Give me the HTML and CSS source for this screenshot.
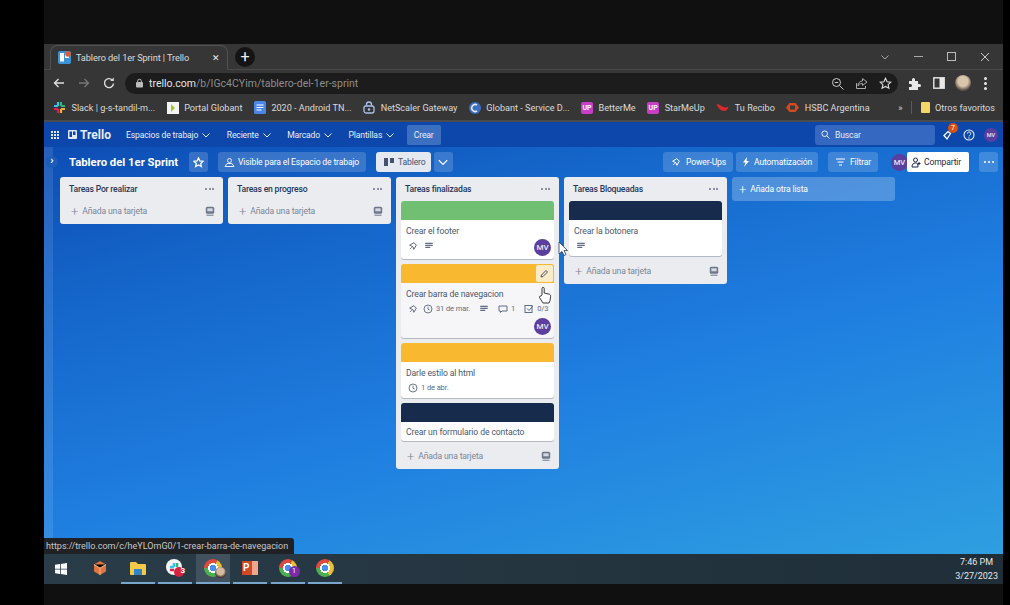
FILE: index.html
```html
<!doctype html>
<html>
	<head>
		<meta charset="utf-8">
		<title>Tablero del 1er Sprint | Trello</title>
		<link rel="stylesheet" href="styles.css">
	</head>
	<body>
		<svg class="defs" width="0" height="0">
			<symbol id="chev" viewBox="0 0 10 10"><path d="M1.500 3.500l3.500 3.500 3.500-3.500" fill="none" stroke="currentColor" stroke-width="1"/></symbol>
			<symbol id="pin" viewBox="0 0 12 12"><path d="M2 5l5-3 3 3-3 5-1-3z" fill="none" stroke="currentColor" stroke-width="1.200" stroke-linejoin="round"/><path d="M4.500 7.500L2.500 9.500" stroke="currentColor" stroke-width="1.100"/></symbol>
			<symbol id="lines" viewBox="0 0 12 12"><path d="M1.500 2.700h9M1.500 5.200h9M1.500 7.700h6" stroke="currentColor" stroke-width="1.500"/></symbol>
			<symbol id="clock" viewBox="0 0 12 12"><circle cx="6" cy="6" r="4.800" fill="none" stroke="currentColor" stroke-width="1.100"/><path d="M6 3.200V6.300L8 7.300" fill="none" stroke="currentColor" stroke-width="1"/></symbol>
			<symbol id="tmpl" viewBox="0 0 10 10"><rect x=".8" y=".8" width="8.400" height="7" rx="1.500" fill="currentColor"/><path d="M1.500 9.200h7" stroke="currentColor" stroke-width="1"/><rect x="2.300" y="2.300" width="5.400" height="3" fill="#d5d9df"/></symbol>
		</svg>
		<div class="screen">
			<div class="window">
				<div class="tabstrip">
					<div class="tab">
						<svg class="favicon" width="13" height="13" viewBox="0 0 13 13"><rect width="13" height="13" rx="2" fill="#3d93d8"/><rect x="2" y="2" width="4" height="8.500" fill="#fff"/><rect x="7" y="2" width="4" height="5" fill="#fff"/><circle cx="10" cy="3" r="2.800" fill="#dd5a35"/></svg>
						<span class="tab-title">Tablero del 1er Sprint | Trello</span>
						<span class="tab-x">&#x2715;</span>
					</div>
					<span class="newtab">+</span>
					<div class="winbtns">
						<svg width="10" height="10"><use href="#chev"/></svg>
						<span class="min"></span>
						<span class="max"></span>
						<svg width="10" height="10" viewBox="0 0 10 10"><path d="M1 1l8 8M9 1l-8 8" stroke="#c9c9c9" stroke-width="1"/></svg>
					</div>
				</div>
				<div class="toolbar">
					<svg class="nav-ic" width="14" height="14" viewBox="0 0 14 14"><path d="M12 7H2.500M6.500 3l-4 4 4 4" fill="none" stroke="#dedede" stroke-width="1.400"/></svg>
					<svg class="nav-ic" width="14" height="14" viewBox="0 0 14 14"><path d="M2 7h9.500M7.500 3l4 4-4 4" fill="none" stroke="#777" stroke-width="1.400"/></svg>
					<svg class="nav-ic" width="14" height="14" viewBox="0 0 14 14"><path d="M11.500 7.500a4.500 4.500 0 1 1-1.300-3.600" fill="none" stroke="#dedede" stroke-width="1.400"/><path d="M11.800 1.500v3.600H8.200z" fill="#dedede"/></svg>
					<div class="omnibox">
						<svg width="9" height="10" viewBox="0 0 9 10"><rect x="1" y="4" width="7" height="5.500" rx="1" fill="#bbb"/><path d="M2.700 4.500V3a1.800 1.800 0 0 1 3.600 0v1.500" fill="none" stroke="#bbb"/></svg>
						<span class="url"><b>trello.com</b>/b/IGc4CYim/tablero-del-1er-sprint</span>
						<svg class="omni-ic" width="13" height="13" viewBox="0 0 13 13"><circle cx="5.500" cy="5.500" r="4" fill="none" stroke="#ccc"/><path d="M8.500 8.500l4 4M3.700 5.500h3.600" stroke="#ccc"/></svg>
						<svg class="omni-ic" width="13" height="13" viewBox="0 0 13 13"><path d="M1.500 6v5.500h9V9M7.500 1.500l4.500 3.500-4.500 3.500V6.500C5 6.500 3.500 7.500 3 9c0-3 2-5 4.500-5z" fill="none" stroke="#aaa"/></svg>
						<svg class="omni-ic" width="13" height="13" viewBox="0 0 13 13"><path d="M6.500 1.200l1.600 3.500 3.800.4-2.800 2.500.8 3.700-3.400-1.900-3.400 1.900.8-3.700L1.100 5.100l3.800-.4z" fill="none" stroke="#ddd" stroke-width="1.100"/></svg>
					</div>
					<svg class="tool-ic puzzle" width="13" height="13" viewBox="0 0 13 13"><path d="M1 4h3V2.500a1.500 1.500 0 0 1 3 0V4h3v3h1.500a1.500 1.500 0 0 1 0 3H10v3H1V10h1.500a1.500 1.500 0 0 0 0-3H1z" fill="#e8e8e8"/></svg>
					<svg class="tool-ic" width="12" height="12" viewBox="0 0 12 12"><rect x=".8" y=".8" width="10.400" height="10.400" fill="none" stroke="#e8e8e8" stroke-width="1.400"/><rect x="6.500" y="1" width="4.500" height="10" fill="#e8e8e8"/></svg>
					<span class="profile"></span>
					<span class="dots3"><i></i><i></i><i></i></span>
				</div>
				<div class="bookmarks">
					<span class="bm"><svg width="13" height="13" viewBox="0 0 13 13"><path d="M5 1v4M1 5h4" stroke="#36c5f0" stroke-width="2.200"/><path d="M8 1v4M8 5h4" stroke="#2eb67d" stroke-width="2.200"/><path d="M8 12V8M12 8H8" stroke="#ecb22e" stroke-width="2.200"/><path d="M5 12V8M1 8h4" stroke="#e01e5a" stroke-width="2.200"/></svg>Slack | g-s-tandil-m...</span>
					<span class="bm"><svg width="12" height="12" viewBox="0 0 12 12"><rect width="12" height="12" fill="#f4f4f4"/><path d="M4 2l4 4-4 4z" fill="#a5c33a"/></svg>Portal Globant</span>
					<span class="bm"><svg width="12" height="13" viewBox="0 0 12 13"><rect width="12" height="13" rx="1.500" fill="#4a86e8"/><path d="M2.500 4h7M2.500 6.500h7M2.500 9h5" stroke="#fff" stroke-width="1.100"/></svg>2020 - Android TN...</span>
					<span class="bm"><svg width="12" height="13" viewBox="0 0 12 13"><rect x="1" y="5" width="10" height="7" rx="2" fill="none" stroke="#a9c1ee" stroke-width="1.300"/><path d="M3.500 5V3.500a2.500 2.500 0 0 1 5 0V5" fill="none" stroke="#a9c1ee" stroke-width="1.300"/><circle cx="6" cy="8.500" r="1.200" fill="#a9c1ee"/></svg>NetScaler Gateway</span>
					<span class="bm"><svg width="12" height="12" viewBox="0 0 12 12"><circle cx="6" cy="6" r="6" fill="#3c6fc0"/><path d="M8 3a3.500 3.500 0 1 0 0 6" fill="none" stroke="#e5e9f2" stroke-width="1.500"/></svg>Globant - Service D...</span>
					<span class="bm"><span class="up">UP</span>BetterMe</span>
					<span class="bm"><span class="up">UP</span>StarMeUp</span>
					<span class="bm"><svg width="13" height="9" viewBox="0 0 13 9"><path d="M.5 1c3 0 4 1.500 6 2.500S10 5 12.500 3.500C12 6.500 10 8.500 7.500 8 4 7.500 2 5 .5 1z" fill="#d92b2b"/></svg>Tu Recibo</span>
					<span class="bm"><svg width="13" height="9" viewBox="0 0 13 9"><path d="M0 4.500L3.500 0h6L13 4.500 9.500 9h-6z" fill="#d8481d"/><rect x="4" y="2.500" width="5" height="4" fill="#3a3a3a"/></svg>HSBC Argentina</span>
					<span class="grow"></span>
					<span class="bm-more">&raquo;</span>
					<span class="bm-sep"></span>
					<span class="bm"><svg width="9" height="11" viewBox="0 0 9 11"><rect width="9" height="11" rx="1" fill="#f4d768"/></svg>Otros favoritos</span>
				</div>
				<nav class="trello-nav">
					<span class="apps"><i></i><i></i><i></i><i></i><i></i><i></i><i></i><i></i><i></i></span>
					<span class="logo"><svg width="9" height="9" viewBox="0 0 9 9"><rect width="9" height="9" rx="1" fill="#dfe9f8"/><rect x="1.500" y="1.500" width="2.500" height="5.500" fill="#0d47ab"/><rect x="5" y="1.500" width="2.500" height="3.500" fill="#0d47ab"/></svg>Trello</span>
					<span class="menu">Espacios de trabajo <svg width="10" height="10"><use href="#chev"/></svg></span>
					<span class="menu">Reciente <svg width="10" height="10"><use href="#chev"/></svg></span>
					<span class="menu">Marcado <svg width="10" height="10"><use href="#chev"/></svg></span>
					<span class="menu">Plantillas <svg width="10" height="10"><use href="#chev"/></svg></span>
					<span class="crear">Crear</span>
					<span class="grow"></span>
					<span class="search"><svg width="9" height="9" viewBox="0 0 9 9"><circle cx="3.700" cy="3.700" r="2.800" fill="none" stroke="#e5edf8"/><path d="M5.800 5.800L8.500 8.500" stroke="#e5edf8"/></svg>Buscar</span>
					<span class="bell"><svg width="12" height="12" viewBox="0 0 12 12"><path d="M2 6.500L5 10 8.500 4.500 6 2.500z" fill="none" stroke="#fff" stroke-width="1.300"/></svg><em class="badge">7</em></span>
					<svg width="12" height="12" viewBox="0 0 12 12"><circle cx="6" cy="6" r="5" fill="none" stroke="#e5edf8" stroke-width="1.100"/><path d="M4.400 4.700a1.700 1.700 0 1 1 2.400 1.500c-.6.300-.8.600-.8 1.200" fill="none" stroke="#e5edf8"/><circle cx="6" cy="9" r=".7" fill="#e5edf8"/></svg>
					<span class="avatar small">MV</span>
				</nav>
				<main class="board">
					<span class="expand">&rsaquo;</span>
					<div class="boardbar">
						<h1 class="board-name">Tablero del 1er Sprint</h1>
						<span class="bbtn star"><svg width="11" height="11" viewBox="0 0 13 13"><path d="M6.500 1.200l1.600 3.500 3.800.4-2.800 2.500.8 3.700-3.400-1.900-3.400 1.900.8-3.700L1.100 5.100l3.800-.4z" fill="none" stroke="#fff" stroke-width="1.500"/></svg></span>
						<span class="bbtn vis"><svg width="11" height="11" viewBox="0 0 11 11"><circle cx="5.500" cy="3.500" r="2" fill="none" stroke="#e5edf8"/><path d="M1 9.500l2-3h5l2 3z" fill="none" stroke="#e5edf8"/></svg>Visible para el Espacio de trabajo</span>
						<span class="bbtn active"><svg width="10" height="8" viewBox="0 0 10 8"><path d="M0 0h4v8H0zM6 0h4v5H6z" fill="#42526e"/></svg>Tablero</span>
						<span class="bbtn caret"><svg width="12" height="12" viewBox="0 0 10 10"><use href="#chev"/></svg></span>
						<span class="grow"></span>
						<span class="bbtn pow"><svg width="10" height="10" viewBox="0 0 12 12" color="#fff"><use href="#pin"/></svg>Power-Ups</span>
						<span class="bbtn aut"><svg width="8" height="10" viewBox="0 0 8 10"><path d="M5 0L1 5.500h2.500L2 10l5-6H4.500z" fill="#fff"/></svg>Automatización</span>
						<span class="bbtn fil"><svg width="9" height="8" viewBox="0 0 9 8"><path d="M0 1h9M1.500 4h6M3 7h3" stroke="#fff"/></svg>Filtrar</span>
						<span class="avatar member">MV</span>
						<span class="share"><svg width="11" height="11" viewBox="0 0 11 11"><circle cx="4.500" cy="3" r="2" fill="none" stroke="#172b4d"/><path d="M1 10c0-3 1.500-4 3.500-4S7 7 7 10zM8 5v3M6.500 6.500h3" fill="none" stroke="#172b4d"/></svg>Compartir</span>
						<span class="bbtn more"><i></i><i></i><i></i></span>
					</div>
					<div class="lists">
						<section class="list">
							<header class="list-head"><h2>Tareas Por realizar</h2><span class="ell"><i></i><i></i><i></i></span></header>
							<div class="add"><span class="plus">+</span>Añada una tarjeta<svg width="10" height="10"><use href="#tmpl"/></svg></div>
						</section>
						<section class="list">
							<header class="list-head"><h2>Tareas en progreso</h2><span class="ell"><i></i><i></i><i></i></span></header>
							<div class="add"><span class="plus">+</span>Añada una tarjeta<svg width="10" height="10"><use href="#tmpl"/></svg></div>
						</section>
						<section class="list">
							<header class="list-head"><h2>Tareas finalizadas</h2><span class="ell"><i></i><i></i><i></i></span></header>
							<article class="card">
								<div class="cover green"></div>
								<div class="title">Crear el footer</div>
								<div class="badges tall">
									<svg width="10" height="10"><use href="#pin"/></svg>
									<svg width="10" height="10"><use href="#lines"/></svg>
									<span class="avatar">MV</span>
								</div>
							</article>
							<article class="card hover">
								<div class="cover orange"><span class="pencil"><svg width="9" height="9" viewBox="0 0 9 9"><path d="M1 8l.5-2L6 1.500 7.500 3 3 7.500z" fill="none" stroke="#42526e"/></svg></span></div>
								<div class="title">Crear barra de navegacion</div>
								<div class="badges">
									<svg width="10" height="10"><use href="#pin"/></svg>
									<svg width="10" height="10"><use href="#clock"/></svg><small>31 de mar.</small>
									<svg class="gap" width="10" height="10"><use href="#lines"/></svg>
									<svg class="gap" width="10" height="10" viewBox="0 0 10 10"><path d="M1 2h8v5H4L2.500 8.500V7H1z" fill="none" stroke="#5e6c84"/></svg><small>1</small>
									<svg class="gap" width="10" height="10" viewBox="0 0 10 10"><rect x="1" y="1.500" width="7" height="7" fill="none" stroke="#5e6c84"/><path d="M3 4.500l2 2L9 2" fill="none" stroke="#5e6c84"/></svg><small>0/3</small>
								</div>
								<div class="card-foot"><span class="avatar">MV</span></div>
							</article>
							<article class="card">
								<div class="cover orange"></div>
								<div class="title">Darle estilo al html</div>
								<div class="badges">
									<svg width="10" height="10"><use href="#clock"/></svg><small>1 de abr.</small>
								</div>
							</article>
							<article class="card">
								<div class="cover navy"></div>
								<div class="title only">Crear un formulario de contacto</div>
							</article>
							<div class="add"><span class="plus">+</span>Añada una tarjeta<svg width="10" height="10"><use href="#tmpl"/></svg></div>
						</section>
						<section class="list">
							<header class="list-head"><h2>Tareas Bloqueadas</h2><span class="ell"><i></i><i></i><i></i></span></header>
							<article class="card">
								<div class="cover navy"></div>
								<div class="title">Crear la botonera</div>
								<div class="badges"><svg width="10" height="10"><use href="#lines"/></svg></div>
							</article>
							<div class="add"><span class="plus">+</span>Añada una tarjeta<svg width="10" height="10"><use href="#tmpl"/></svg></div>
						</section>
						<div class="addlist"><span class="plus">+</span>Añada otra lista</div>
					</div>
				</main>
				<div class="status">https://trello.com/c/heYLOmG0/1-crear-barra-de-navegacion</div>
				<svg class="cursor arrow" width="10" height="16" viewBox="0 0 10 16"><path d="M1 1v12l3-2.500 2 4 2-1-2-4h3.500z" fill="#fff" stroke="#2a3a55" stroke-width=".8"/></svg>
				<svg class="cursor hand" width="14" height="18" viewBox="0 0 14 18"><path d="M4 9V2.500a1.100 1.100 0 0 1 2.200 0V7l5 1.200c1 .3 1.500 1 1.400 2L12 14.500 11 17H5L1.500 11.500c-.5-1 .8-2 1.500-1.200z" fill="#fff" stroke="#222" stroke-width=".9"/></svg>
			</div>
			<footer class="taskbar">
				<svg class="win" width="12" height="12" viewBox="0 0 12 12"><path d="M0 1.700l5-.7v4.700H0zM5.800.9L12 0v5.700H5.800zM0 6.400h5V11l-5-.7zM5.800 6.400H12V12l-6.200-.9z" fill="#fff"/></svg>
				<span class="tb"><svg width="18" height="18" viewBox="0 0 18 18"><path d="M9 2l6 3.500v7L9 16l-6-3.500v-7z" fill="#e0763f"/><path d="M3 5.500L9 9l6-3.500M9 9v7" stroke="#f3b48a"/></svg></span>
				<span class="tb on"><svg width="18" height="16" viewBox="0 0 18 16"><path d="M1 3a1 1 0 0 1 1-1h5l2 2h7a1 1 0 0 1 1 1v9a1 1 0 0 1-1 1H2a1 1 0 0 1-1-1z" fill="#f5c945"/><rect x="5" y="9" width="8" height="6" fill="#2f83c7"/></svg></span>
				<span class="tb on"><svg width="20" height="20" viewBox="0 0 20 20"><circle cx="9" cy="9" r="8" fill="#f4f4f4"/><path d="M5 9h4M9 5v4" stroke="#36c5f0" stroke-width="2.500"/><path d="M12 5v4" stroke="#2eb67d" stroke-width="2.500"/><path d="M5 12h4" stroke="#e01e5a" stroke-width="2.500"/><circle cx="14" cy="14" r="5" fill="#d5243b"/></svg><em class="tb-num">3</em></span>
				<span class="tb on cur"><span class="chrome"></span><span class="mini-face"></span></span>
				<span class="tb on"><svg width="18" height="18" viewBox="0 0 18 18"><rect x="6" y="2" width="11" height="14" fill="#f1a58b"/><rect x="1" y="2" width="10" height="14" fill="#d24726"/></svg><em class="ppt">P</em></span>
				<span class="tb on"><span class="chrome"></span><em class="tb-pur">1</em></span>
				<span class="tb on"><span class="chrome"></span></span>
				<span class="grow"></span>
				<div class="clock"><div>7:46 PM</div><div>3/27/2023</div></div>
			</footer>
		</div>
	</body>
</html>
```

FILE: styles.css
```css
html, body {
    margin: 0;
    padding: 0;
    height: 100%;
    background: #000;
    overflow: hidden;
    font-family: Roboto, "Noto Sans", Arial, sans-serif;
}
svg {
    flex: none;
}
.defs {
    display: none;
}
.screen {
    margin-left: 44px;
    width: 959px;
    height: 605px;
    box-sizing: border-box;
    padding: 44px 0 21px;
    background: #101010;
    display: flex;
    flex-direction: column;
}
.window {
    position: relative;
    height: 510px;
    display: flex;
    flex-direction: column;
    overflow: hidden;
}
.grow {
    flex: 1;
}

/* chrome */
.tabstrip {
    height: 26px;
    flex: none;
    background: #363636;
    display: flex;
    align-items: flex-end;
    box-sizing: border-box;
    padding-left: 6px;
    border-bottom: 1px solid #4a4a4a;
}
.tab {
    width: 178px;
    height: 25px;
    box-sizing: border-box;
    background: #363636;
    border: 1px solid #525252;
    border-bottom: 1px solid #363636;
    border-radius: 7px 7px 0 0;
    margin-bottom: -1px;
    display: flex;
    align-items: center;
    padding: 0 7px 0 7px;
    color: #dcdcdc;
    font-size: 9.200px;
    letter-spacing: -.1px;
}
.favicon {
    margin-right: 5px;
}
.tab-title {
    flex: 1;
}
.tab-x {
    font-size: 9px;
    color: #eee;
}
.newtab {
    width: 20px;
    height: 20px;
    margin: 0 0 2px 7px;
    border-radius: 50%;
    background: #141414;
    color: #eee;
    text-align: center;
    line-height: 19px;
    font-size: 16px;
}
.winbtns {
    margin-left: auto;
    height: 25px;
    display: flex;
    align-items: center;
    gap: 24px;
    padding-right: 13px;
    color: #a5a5a5;
}
.min {
    width: 9px;
    border-top: 1px solid #aaa;
}
.max {
    width: 7px;
    height: 7px;
    border: 1px solid #bbb;
}
.toolbar {
    height: 26px;
    flex: none;
    background: #363636;
    display: flex;
    align-items: center;
    padding-left: 8px;
}
.nav-ic {
    margin-right: 11px;
}
.omnibox {
    margin-left: -2px;
    width: 773px;
    height: 21px;
    border-radius: 11px;
    background: #1c1c1c;
    display: flex;
    align-items: center;
    box-sizing: border-box;
    padding: 0 6px 0 10px;
}
.url {
    flex: 1;
    margin-left: 5px;
    font-size: 10.500px;
    color: #8e8e8e;
}
.url b {
    font-weight: 400;
    color: #e4e4e4;
}
.omni-ic {
    margin-left: 11px;
}
.tool-ic {
    margin-left: 12px;
}
.tool-ic.puzzle {
    margin-left: 10px;
}
.profile {
    width: 16px;
    height: 16px;
    margin-left: 10px;
    border-radius: 50%;
    background: radial-gradient(circle at 50% 40%, #d9c4ac 0 40%, #5f5145 70%);
}
.dots3 {
    margin-left: 13px;
    display: flex;
    flex-direction: column;
    gap: 2px;
}
.dots3 i {
    width: 3px;
    height: 3px;
    border-radius: 50%;
    background: #e8e8e8;
}
.bookmarks {
    height: 26px;
    flex: none;
    box-sizing: border-box;
    background: #363636;
    border-bottom: 2px solid #4b4b4b;
    display: flex;
    align-items: center;
    padding: 0 8px 1px 9px;
    gap: 11.500px;
    color: #dadada;
    font-size: 9.100px;
    white-space: nowrap;
}
.bm {
    display: flex;
    align-items: center;
    gap: 5.500px;
}
.up {
    width: 12px;
    height: 12px;
    border-radius: 2px;
    background: #c93ec6;
    color: #fff;
    font-size: 7px;
    font-weight: 700;
    text-align: center;
    line-height: 12px;
}
.bm-sep {
    height: 13px;
    margin: 0 -3px;
    border-left: 1px solid #5a5a5a;
}

/* trello header */
.trello-nav {
    height: 25px;
    flex: none;
    background: #0d47ab;
    display: flex;
    align-items: center;
    padding: 0 4px 0 7px;
    color: #e5edf8;
    font-size: 8.600px;
    letter-spacing: -.15px;
    white-space: nowrap;
}
.apps {
    display: grid;
    grid-template-columns: repeat(3, 2px);
    gap: 1px;
    margin-right: 9px;
}
.apps i {
    width: 2px;
    height: 2px;
    background: #dfe9f8;
}
.logo {
    display: flex;
    align-items: center;
    gap: 3px;
    font-size: 12px;
    font-weight: 700;
    letter-spacing: 0;
    margin-right: 12px;
    width: 46px;
}
.menu {
    display: flex;
    align-items: center;
    gap: 3px;
    margin-right: 15.500px;
}
.crear {
    width: 34px;
    height: 20px;
    margin-left: -4px;
    border-radius: 2px;
    background: #3c6fc0;
    text-align: center;
    line-height: 20px;
}
.search {
    width: 120px;
    height: 20px;
    box-sizing: border-box;
    border-radius: 3px;
    background: #3568c0;
    display: flex;
    align-items: center;
    gap: 5px;
    padding-left: 6px;
    margin-right: 7px;
}
.bell {
    position: relative;
    display: flex;
    margin: 0 9px 0 0;
}
.badge {
    position: absolute;
    left: 6px;
    top: -6px;
    width: 10px;
    height: 10px;
    border-radius: 50%;
    background: #d9500f;
    color: #fff;
    font-size: 7px;
    font-style: normal;
    text-align: center;
    line-height: 10px;
}
.avatar {
    width: 17px;
    height: 17px;
    border-radius: 50%;
    background: #5a3f9e;
    color: #e9e6f6;
    font-size: 8px;
    font-weight: 500;
    letter-spacing: 0;
    text-align: center;
    line-height: 17px;
    flex: none;
}
.avatar.small {
    width: 14px;
    height: 14px;
    margin-left: 9px;
    margin-right: 1px;
    font-size: 5.500px;
    line-height: 14px;
}

/* board */
.board {
    position: relative;
    flex: 1;
    box-sizing: border-box;
    padding-left: 10px;
    background: linear-gradient(165deg, #0d4db4 0%, #1464c8 22%, #1f7fe0 58%, #2e9fe0 100%);
}
.board::before {
    content: "";
    position: absolute;
    left: 0;
    top: 0;
    bottom: 0;
    width: 9px;
    background: rgba(255, 255, 255, .1);
}
.expand {
    position: absolute;
    left: 2px;
    top: 9px;
    width: 12px;
    height: 12px;
    border-radius: 50%;
    background: #1b5cb8;
    color: #fff;
    font-size: 11px;
    font-weight: 700;
    text-align: center;
    line-height: 10px;
}
.boardbar {
    height: 30px;
    display: flex;
    align-items: center;
    padding: 0 5px 0 6px;
    color: #fff;
    font-size: 8.600px;
    letter-spacing: -.15px;
    white-space: nowrap;
    gap: 3px;
}
.board-name {
    width: 110px;
    margin: 0 7px 0 9px;
    font-size: 11.300px;
    font-weight: 700;
    letter-spacing: 0;
    color: #fff;
}
.bbtn {
    height: 20px;
    box-sizing: border-box;
    display: flex;
    align-items: center;
    gap: 6px;
    padding: 0 7px;
    border-radius: 3px;
    background: rgba(255, 255, 255, .17);
}
.star {
    width: 19px;
    padding: 0 4px;
    margin-right: 7px;
}
.vis {
    width: 148px;
    gap: 3px;
    padding-left: 6px;
    margin-right: 7px;
}
.active {
    width: 55px;
    background: #e4e9f1;
    color: #42526e;
    padding: 0 8px;
    gap: 4px;
}
.caret {
    width: 19px;
    padding: 0 3px;
}
.pow {
    width: 70px;
    padding-left: 8px;
    gap: 5px;
}
.aut {
    width: 82px;
    gap: 4px;
    padding-left: 6px;
    margin-right: 7px;
}
.fil {
    width: 50px;
    padding-left: 8px;
    gap: 5px;
    margin-right: 10px;
}
.more {
    width: 19px;
    justify-content: center;
    gap: 2px;
    padding: 0;
    margin-left: 7px;
}
.more i, .ell i {
    width: 2px;
    height: 2px;
    border-radius: 50%;
    background: #fff;
}
.member {
    margin-right: -4px;
    font-size: 7.500px;
}
.share {
    position: relative;
    height: 20px;
    width: 62px;
    box-sizing: border-box;
    padding-right: 4px;
    background: #fff;
    color: #172b4d;
    border-radius: 2px;
    display: flex;
    align-items: center;
    justify-content: center;
    gap: 2px;
}
.lists {
    display: flex;
    align-items: flex-start;
    gap: 5px;
    padding-left: 6px;
}
.list {
    width: 163px;
    flex: none;
    box-sizing: border-box;
    padding: 0 5px;
    background: #ebecf0;
    border-radius: 3px;
    color: #172b4d;
}
.list-head {
    height: 24px;
    display: flex;
    align-items: center;
    justify-content: space-between;
    padding: 0 4px;
}
.list-head h2 {
    margin: 0;
    font-size: 8.600px;
    font-weight: 500;
    letter-spacing: -.2px;
    color: #25385a;
}
.ell {
    display: flex;
    gap: 1.500px;
}
.ell i {
    background: #6b778c;
}
.add {
    height: 23px;
    box-sizing: border-box;
    display: flex;
    align-items: center;
    padding: 0 3px 3px 6px;
    color: #79859a;
    font-size: 8.600px;
    letter-spacing: -.15px;
}
.add svg {
    margin-left: auto;
    color: #6b778c;
}
.plus {
    font-size: 13px;
    line-height: 13px;
    margin-right: 4px;
    font-weight: 300;
}
.card {
    background: #fff;
    border-radius: 3px;
    box-shadow: 0 1px 0 rgba(9, 30, 66, .25);
    margin-bottom: 5px;
    overflow: hidden;
    color: #172b4d;
}
.cover {
    height: 19px;
    position: relative;
}
.green {
    background: #70bf72;
}
.orange {
    background: #f8b82f;
}
.navy {
    background: #172b4d;
}
.pencil {
    position: absolute;
    right: 1px;
    top: 1px;
    width: 17px;
    height: 17px;
    border-radius: 2px;
    background: #fbecc7;
    display: flex;
    align-items: center;
    justify-content: center;
}
.hover {
    background: #f6f6f8;
}
.title {
    padding: 4px 5px 0;
    height: 14px;
    font-size: 8.600px;
    letter-spacing: -.1px;
    line-height: 14px;
    color: #4a576e;
}
.title.only {
    padding-top: 3px;
    height: 16px;
}
.badges {
    display: flex;
    align-items: center;
    gap: 5px;
    height: 18px;
    box-sizing: border-box;
    padding: 0 5px 3px 7px;
    color: #5e6c84;
}
.badges small {
    font-size: 7.500px;
    letter-spacing: -.1px;
    margin-left: -2px;
    white-space: nowrap;
}
.badges .gap {
    margin-left: 4px;
}
.badges.tall {
    height: 21px;
    gap: 6px;
    padding-bottom: 6px;
}
.badges.tall .avatar {
    margin-left: auto;
    margin-right: -2px;
    margin-top: 3px;
}
.card-foot {
    display: flex;
    justify-content: flex-end;
    margin-top: -1px;
    padding: 0 3px 3px;
}
.addlist {
    width: 163px;
    height: 24px;
    box-sizing: border-box;
    display: flex;
    align-items: center;
    padding-left: 7px;
    border-radius: 3px;
    background: rgba(255, 255, 255, .24);
    color: #fff;
    font-size: 8.600px;
    letter-spacing: -.15px;
}

/* things lying over the page */
.status {
    position: absolute;
    left: 0;
    bottom: 0;
    height: 16px;
    padding: 0 6px 0 2px;
    background: #202124;
    border-radius: 0 3px 0 0;
    color: #c8c8c8;
    font-size: 9px;
    line-height: 16px;
}
.cursor {
    position: absolute;
}
.arrow {
    left: 514px;
    top: 197px;
}
.hand {
    left: 494px;
    top: 242px;
}

/* windows taskbar */
.taskbar {
    height: 30px;
    flex: none;
    background: linear-gradient(90deg, #293c47, #1f2e39);
    display: flex;
    align-items: center;
    color: #e4e8eb;
}
.win {
    margin: 0 21px 0 11px;
}
.win + .tb {
    margin-left: -5px;
}
.tb {
    position: relative;
    width: 34px;
    height: 30px;
    margin-right: 3.500px;
    box-sizing: border-box;
    display: flex;
    align-items: center;
    justify-content: center;
    border-bottom: 2px solid transparent;
}
.tb.on {
    border-bottom-color: #7ba6cc;
}
.tb.cur {
    background: #41525e;
}
.chrome {
    width: 18px;
    height: 18px;
    border-radius: 50%;
    background:
        radial-gradient(circle, #4a8ff0 0 3.500px, #fff 3.500px 5px, transparent 5px),
        conic-gradient(from 30deg, #e9c033 0 120deg, #4caf50 120deg 240deg, #dd4b3e 240deg 360deg);
}
.mini-face {
    position: absolute;
    right: 4px;
    bottom: 4px;
    width: 11px;
    height: 11px;
    border-radius: 50%;
    background: radial-gradient(circle at 50% 40%, #d7bba0 0 40%, #3f352d 70%);
}
.tb-num, .tb-pur, .ppt {
    position: absolute;
    font-style: normal;
    color: #fff;
}
.tb-num {
    right: 7px;
    bottom: 7px;
    font-size: 8px;
    font-weight: 700;
}
.tb-pur {
    right: 5px;
    bottom: 5px;
    width: 11px;
    height: 11px;
    border-radius: 50%;
    background: #7b2aa8;
    font-size: 7px;
    text-align: center;
    line-height: 11px;
}
.ppt {
    left: 10px;
    top: 8px;
    font-size: 10px;
    font-weight: 700;
}
.clock {
    padding-right: 5px;
    text-align: center;
    font-size: 9px;
    line-height: 14px;
}
```
